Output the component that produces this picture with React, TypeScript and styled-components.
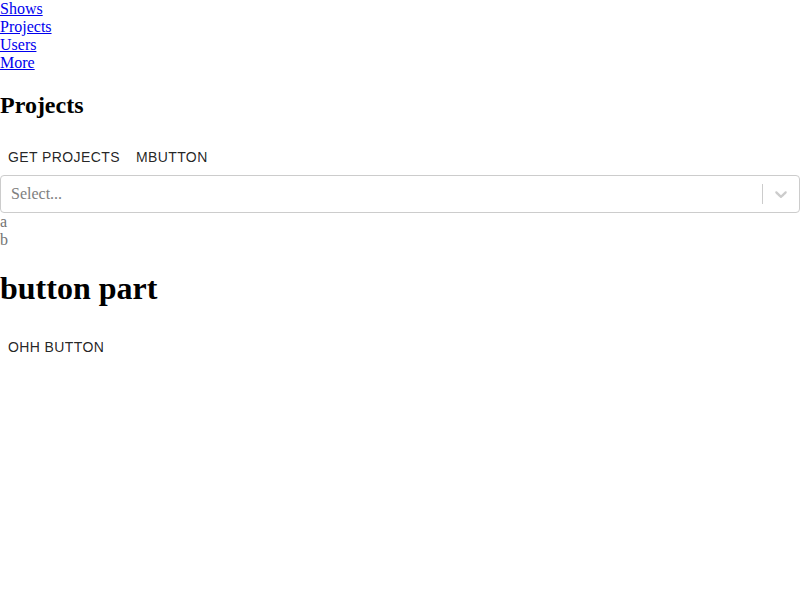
import { createGlobalStyle } from 'styled-components';
import styled from 'styled-components';

const GlobalStyle = createGlobalStyle`
  body {
    margin: 0;
    font-family: "Liberation Serif", "Times New Roman", serif;
    font-size: 16px;
    background: #fff;
  }
`;

const Nav = styled.nav`
  display: flex;
  flex-direction: column;
  align-items: flex-start;
  line-height: 18px;
`;

const NavLink = styled.a`
  color: #0000ee;
  text-decoration: underline;
`;

const SubTitle = styled.h2`
  font-size: 24px;
  font-weight: bold;
  margin: 19.92px 0;
  line-height: 27.2px;
`;

const Title = styled.h1`
  font-size: 32px;
  font-weight: bold;
  margin: 21.44px 0;
  line-height: 37px;
`;

const Toolbar = styled.div`
  display: flex;
  align-items: center;
`;

const TextButton = styled.button`
  display: inline-flex;
  align-items: center;
  justify-content: center;
  min-width: 64px;
  height: 36px;
  padding: 6px 8px;
  border: 0;
  border-radius: 4px;
  background: transparent;
  color: rgba(0, 0, 0, 0.87);
  font-family: "Liberation Sans", Arial, sans-serif;
  font-size: 14px;
  font-weight: 400;
  letter-spacing: 0.4px;
  text-transform: uppercase;
  cursor: pointer;
`;

const SelectControl = styled.div`
  display: flex;
  align-items: center;
  min-height: 38px;
  box-sizing: border-box;
  border: 1px solid hsl(0, 0%, 80%);
  border-radius: 4px;
  background: #fff;
`;

const ValueArea = styled.div`
  flex: 1;
  padding: 2px 8px;
`;

const Placeholder = styled.span`
  margin: 0 2px;
  color: hsl(0, 0%, 50%);
`;

const Indicators = styled.div`
  display: flex;
  align-self: stretch;
  align-items: center;
`;

const Separator = styled.span`
  align-self: stretch;
  width: 1px;
  margin: 8px 0;
  background: hsl(0, 0%, 80%);
`;

const DropdownIndicator = styled.div`
  display: flex;
  padding: 8px;
  color: hsl(0, 0%, 80%);
`;

const Options = styled.div`
  display: flex;
  flex-direction: column;
  line-height: 18px;
  color: hsl(0, 0%, 45%);
`;

const Chevron = () => (
  <svg width="20" height="20" viewBox="0 0 20 20" fill="currentColor" aria-hidden="true">
    <path d="M4.516 7.548c0.436-0.446 1.043-0.481 1.576 0l3.908 3.747 3.908-3.747c0.533-0.481 1.141-0.446 1.574 0 0.436 0.445 0.408 1.197 0 1.615-0.406 0.418-4.695 4.502-4.695 4.502-0.217 0.223-0.502 0.335-0.787 0.335s-0.57-0.112-0.789-0.335c0 0-4.287-4.084-4.695-4.502s-0.436-1.17 0-1.615z" />
  </svg>
);

const links = ['Shows', 'Projects', 'Users', 'More'];

export default function App() {
  return (
    <>
      <GlobalStyle />
      <Nav>
        {links.map((l) => (
          <NavLink key={l} href={`#${l.toLowerCase()}`}>
            {l}
          </NavLink>
        ))}
      </Nav>
      <SubTitle>Projects</SubTitle>
      <Toolbar>
        <TextButton>Get Projects</TextButton>
        <TextButton>mbutton</TextButton>
      </Toolbar>
      <SelectControl>
        <ValueArea>
          <Placeholder>Select...</Placeholder>
        </ValueArea>
        <Indicators>
          <Separator />
          <DropdownIndicator>
            <Chevron />
          </DropdownIndicator>
        </Indicators>
      </SelectControl>
      <Options>
        <span>a</span>
        <span>b</span>
      </Options>
      <Title>button part</Title>
      <Toolbar>
        <TextButton>ohh button</TextButton>
      </Toolbar>
    </>
  );
}
